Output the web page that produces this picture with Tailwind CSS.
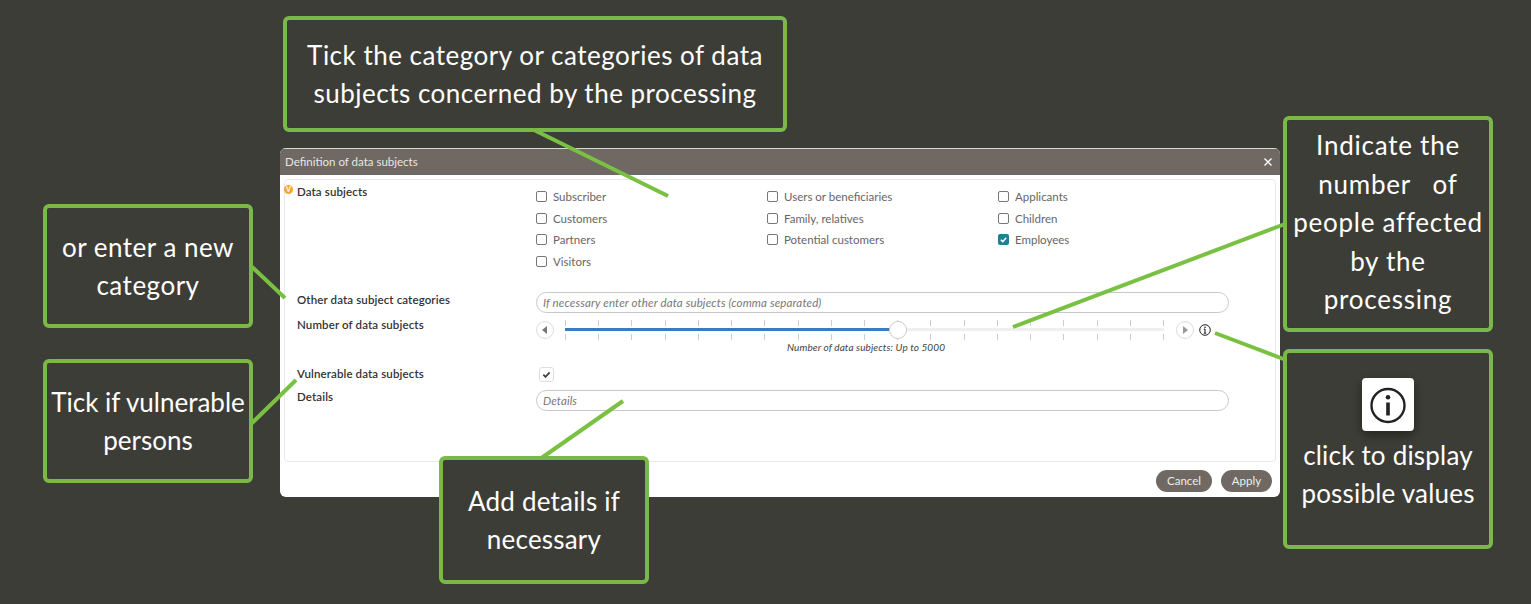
<!DOCTYPE html>
<html lang="en">
<head>
  <meta charset="UTF-8" />
  <title>Definition of data subjects</title>
  <script src="https://cdn.jsdelivr.net/npm/@tailwindcss/browser@4"></script>
</head>
<body class="bg-[#3d3d37] font-['Lato',sans-serif] overflow-hidden">
  <div class="relative w-[1531px] h-[604px] overflow-hidden">

    <!-- dialog -->
    <div class="absolute left-[280px] top-[148px] w-[1000px] h-[349px] bg-white rounded-[6px] overflow-hidden flex flex-col">
      <div class="h-[27px] bg-[#6f6863] border-t border-[#d8d8d8] flex items-center justify-between pl-[5px] pr-[7px] pb-[1px] text-[11.5px] text-[#e8e6e4]">
        <span>Definition of data subjects</span>
        <svg class="w-[10px] h-[10px]" viewBox="0 0 10 10"><path d="M1.5 1.5l7 7M8.5 1.5l-7 7" stroke="#fff" stroke-width="1.4" /></svg>
      </div>
      <div class="relative mx-[4px] mt-[4px] h-[283px] border border-[#e8e8e8] rounded-[4px] pt-[5px] pl-[12px] text-[11.5px] tracking-[0.12px] text-[#333]">
        <!-- mandatory marker -->
        <span class="absolute left-[-1px] top-[5px] w-[9px] h-[9px] rounded-full bg-[#f0a830] text-white text-[7px] leading-[9px] text-center font-bold">V</span>

        <div class="grid grid-cols-[239px_1fr] h-[100px]">
          <div class="font-semibold leading-[14px]">Data subjects</div>
          <div class="grid grid-cols-[231px_231px_1fr] auto-rows-[21.6px] pt-[1px] tracking-normal text-[#666]">
            <label class="flex items-center gap-[6px]"><input type="checkbox" class="w-[11px] h-[11px] appearance-none border border-[#777] rounded-[2px]" />Subscriber</label>
            <label class="flex items-center gap-[6px]"><input type="checkbox" class="w-[11px] h-[11px] appearance-none border border-[#777] rounded-[2px]" />Users or beneficiaries</label>
            <label class="flex items-center gap-[6px]"><input type="checkbox" class="w-[11px] h-[11px] appearance-none border border-[#777] rounded-[2px]" />Applicants</label>
            <label class="flex items-center gap-[6px]"><input type="checkbox" class="w-[11px] h-[11px] appearance-none border border-[#777] rounded-[2px]" />Customers</label>
            <label class="flex items-center gap-[6px]"><input type="checkbox" class="w-[11px] h-[11px] appearance-none border border-[#777] rounded-[2px]" />Family, relatives</label>
            <label class="flex items-center gap-[6px]"><input type="checkbox" class="w-[11px] h-[11px] appearance-none border border-[#777] rounded-[2px]" />Children</label>
            <label class="flex items-center gap-[6px]"><input type="checkbox" class="w-[11px] h-[11px] appearance-none border border-[#777] rounded-[2px]" />Partners</label>
            <label class="flex items-center gap-[6px]"><input type="checkbox" class="w-[11px] h-[11px] appearance-none border border-[#777] rounded-[2px]" />Potential customers</label>
            <label class="flex items-center gap-[6px]">
              <span class="w-[11px] h-[11px] rounded-[2px] bg-[#1f7f95] flex items-center justify-center"><svg class="w-[9px] h-[9px]" viewBox="0 0 10 10"><path d="M2 5.2l2.2 2.2L8 3" fill="none" stroke="#fff" stroke-width="1.7" /></svg></span>Employees</label>
            <label class="flex items-center gap-[6px]"><input type="checkbox" class="w-[11px] h-[11px] appearance-none border border-[#777] rounded-[2px]" />Visitors</label>
          </div>
        </div>

        <div class="grid grid-cols-[239px_693px] mt-[7px] h-[26px]">
          <div class="font-semibold leading-[14px] pt-[1px]">Other data subject categories</div>
          <div class="h-[21px] border border-[#c8c8c8] rounded-full pl-[6px] flex items-center text-[11.5px] italic tracking-[0.15px] text-[#777]">If necessary enter other data subjects (comma separated)</div>
        </div>

        <div class="grid grid-cols-[239px_1fr] h-[49px]">
          <div class="font-semibold leading-[14px]">Number of data subjects</div>
          <div>
            <div class="flex items-center h-[30px] -mt-[3px]">
              <button class="w-[18px] h-[18px] border border-[#ddd] rounded-full flex items-center justify-center">
                <svg class="w-[6px] h-[8px]" viewBox="0 0 6 8"><path d="M5 0v8L0 4z" fill="#777" /></svg>
              </button>
              <div class="relative w-[599px] h-[20px] ml-[11px]">
                <div class="absolute inset-x-0 top-0 flex justify-between"><i class="w-px h-[6px] bg-[#ccc]"></i><i class="w-px h-[6px] bg-[#ccc]"></i><i class="w-px h-[6px] bg-[#ccc]"></i><i class="w-px h-[6px] bg-[#ccc]"></i><i class="w-px h-[6px] bg-[#ccc]"></i><i class="w-px h-[6px] bg-[#ccc]"></i><i class="w-px h-[6px] bg-[#ccc]"></i><i class="w-px h-[6px] bg-[#ccc]"></i><i class="w-px h-[6px] bg-[#ccc]"></i><i class="w-px h-[6px] bg-[#ccc]"></i><i class="w-px h-[6px] bg-[#ccc]"></i><i class="w-px h-[6px] bg-[#ccc]"></i><i class="w-px h-[6px] bg-[#ccc]"></i><i class="w-px h-[6px] bg-[#ccc]"></i><i class="w-px h-[6px] bg-[#ccc]"></i><i class="w-px h-[6px] bg-[#ccc]"></i><i class="w-px h-[6px] bg-[#ccc]"></i><i class="w-px h-[6px] bg-[#ccc]"></i><i class="w-px h-[6px] bg-[#ccc]"></i></div>
                <div class="absolute inset-x-0 bottom-0 flex justify-between"><i class="w-px h-[6px] bg-[#ccc]"></i><i class="w-px h-[6px] bg-[#ccc]"></i><i class="w-px h-[6px] bg-[#ccc]"></i><i class="w-px h-[6px] bg-[#ccc]"></i><i class="w-px h-[6px] bg-[#ccc]"></i><i class="w-px h-[6px] bg-[#ccc]"></i><i class="w-px h-[6px] bg-[#ccc]"></i><i class="w-px h-[6px] bg-[#ccc]"></i><i class="w-px h-[6px] bg-[#ccc]"></i><i class="w-px h-[6px] bg-[#ccc]"></i><i class="w-px h-[6px] bg-[#ccc]"></i><i class="w-px h-[6px] bg-[#ccc]"></i><i class="w-px h-[6px] bg-[#ccc]"></i><i class="w-px h-[6px] bg-[#ccc]"></i><i class="w-px h-[6px] bg-[#ccc]"></i><i class="w-px h-[6px] bg-[#ccc]"></i><i class="w-px h-[6px] bg-[#ccc]"></i><i class="w-px h-[6px] bg-[#ccc]"></i><i class="w-px h-[6px] bg-[#ccc]"></i></div>
                <div class="absolute inset-x-0 top-[8px] h-[3px] bg-[#efefef]"></div>
                <div class="absolute left-0 top-[8px] w-[325px] h-[3px] bg-[#3a7dbd]"></div>
                <div class="absolute left-[324px] top-[0.5px] w-[18px] h-[18px] bg-white border border-[#ccc] rounded-full"></div>
              </div>
              <button class="w-[18px] h-[18px] ml-[12px] border border-[#ddd] rounded-full flex items-center justify-center">
                <svg class="w-[6px] h-[8px]" viewBox="0 0 6 8"><path d="M1 0v8l5-4z" fill="#999" /></svg>
              </button>
              <svg class="w-[12px] h-[12px] ml-[5px]" viewBox="0 0 12 12"><circle cx="6" cy="6" r="5.3" fill="none" stroke="#222" stroke-width="1" /><path d="M6 5v4.2M4.8 9.3h2.4M4.9 5.1H6" fill="none" stroke="#222" stroke-width="1.1" /><circle cx="6" cy="3.2" r="0.8" fill="#222" /></svg>
            </div>
            <div class="w-[660px] text-center text-[10px] italic tracking-[0.1px] text-[#444] leading-[12px] -mt-[4px]">Number of data subjects: Up to 5000</div>
          </div>
        </div>

        <div class="grid grid-cols-[239px_1fr] h-[23px]">
          <div class="font-semibold leading-[14px]">Vulnerable data subjects</div>
          <div class="pl-[3px]">
            <span class="w-[15px] h-[15px] border border-[#ddd] rounded-[3px] flex items-center justify-center"><svg class="w-[9px] h-[9px]" viewBox="0 0 10 10"><path d="M1.5 5.2l2.4 2.4L8.5 2.6" fill="none" stroke="#444" stroke-width="2" /></svg></span>
          </div>
        </div>

        <div class="grid grid-cols-[239px_693px]">
          <div class="font-semibold leading-[14px]">Details</div>
          <div class="h-[21px] border border-[#c8c8c8] rounded-full pl-[6px] pt-[1px] flex items-center text-[11.5px] italic text-[#777]">Details</div>
        </div>
      </div>
      <div class="flex justify-end gap-[9px] pr-[8px] mt-[8px] text-[11.5px] text-[#eee]">
        <button class="w-[56px] h-[22px] rounded-full bg-[#6f6863]">Cancel</button>
        <button class="w-[51px] h-[22px] rounded-full bg-[#6f6863]">Apply</button>
      </div>
    </div>

    <!-- connector lines -->
    <svg class="absolute inset-0 pointer-events-none" width="1531" height="604" viewBox="0 0 1531 604">
      <g stroke="#7ac143" stroke-width="4" fill="none">
        <path d="M530 128L668 196" />
        <path d="M1285 224L1013 327" />
        <path d="M250 265L285 298" />
        <path d="M250 425L296 380" />
        <path d="M540 459L623 401" />
        <path d="M1215 333L1286 360" />
      </g>
    </svg>

    <!-- callouts -->
    <div class="absolute left-[283px] top-[16px] w-[504px] h-[116px] border-4 border-[#7ab84a] rounded-[6px] bg-[#3d3d37] flex items-center justify-center text-center text-white text-[26px] leading-[38.4px] tracking-[0.5px]">Tick the category or categories of data<br />subjects concerned by the processing</div>
    <div class="absolute left-[43px] top-[204px] w-[210px] h-[124px] border-4 border-[#7ab84a] rounded-[6px] bg-[#3d3d37] flex items-center justify-center text-center text-white text-[26px] leading-[38.4px] tracking-[0.5px]">or enter a new<br />category</div>
    <div class="absolute left-[43px] top-[359px] w-[210px] h-[124px] border-4 border-[#7ab84a] rounded-[6px] bg-[#3d3d37] flex items-center justify-center text-center text-white text-[26px] leading-[38.4px]">Tick if vulnerable<br />persons</div>
    <div class="absolute left-[439px] top-[456px] w-[210px] h-[128px] border-4 border-[#7ab84a] rounded-[6px] bg-[#3d3d37] flex items-center justify-center text-center text-white text-[26px] leading-[38.4px] tracking-[0.2px]">Add details if<br />necessary</div>
    <div class="absolute left-[1283px] top-[116px] w-[210px] h-[216px] pb-[3px] border-4 border-[#7ab84a] rounded-[6px] bg-[#3d3d37] flex items-center justify-center text-center text-white text-[26px] leading-[38.4px] tracking-[0.75px]">Indicate the<br />number&nbsp;&nbsp; of<br />people affected<br />by the<br />processing</div>
    <div class="absolute left-[1283px] top-[349px] w-[210px] h-[200px] border-4 border-[#7ab84a] rounded-[6px] bg-[#3d3d37] flex flex-col items-center pt-[25px] text-center text-white text-[26px] leading-[38.4px] tracking-[0.2px]">
      <span class="w-[52px] h-[53px] bg-white rounded-[4px] shadow-[0_4px_10px_rgba(0,0,0,0.4)] flex items-center justify-center mb-[5px]">
        <svg class="w-[38px] h-[38px]" viewBox="0 0 38 38"><circle cx="19" cy="19.5" r="16.5" fill="none" stroke="#222" stroke-width="2.4" /><rect x="17.2" y="16.5" width="3.6" height="13" fill="#222" /><circle cx="19" cy="11.3" r="2.3" fill="#222" /></svg>
      </span>
      click to display<br />possible values
    </div>
  </div>
</body>
</html>
